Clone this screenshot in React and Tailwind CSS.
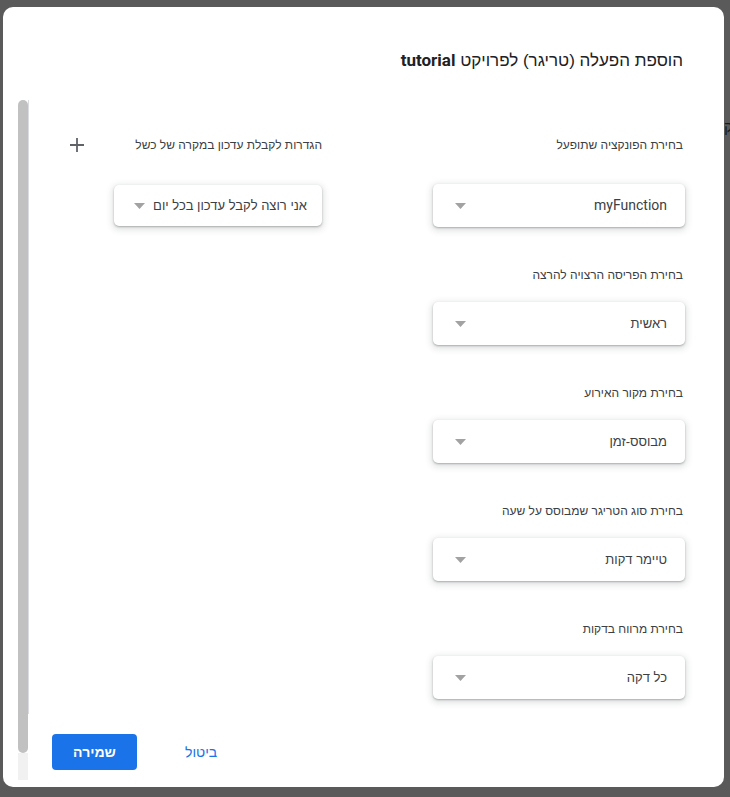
import React from 'react'

const font = { fontFamily: '"Liberation Sans", Arial, sans-serif' }
const latin = { fontFamily: 'Roboto, "Liberation Sans", sans-serif' }

const Arrow = () => (
    <svg width="11" height="6" viewBox="0 0 11 6" className="shrink-0">
        <path d="M0 0h11L5.5 6z" fill="#a2a2a2" />
    </svg>
)

const Field = ({ label, value, first, isLatin }) => (
    <div className={first ? 'pt-[36px]' : 'pt-[39px]'}>
        <div className={`text-[12px] leading-[18px] text-[#3c4043] pr-[2px] ${first ? 'mb-[30px]' : 'mb-[18px]'}`}>{label}</div>
        <div className="w-[252px] h-[43px] bg-white rounded-[5px] shadow-[0_1px_2px_rgba(60,64,67,0.35),0_2px_6px_2px_rgba(60,64,67,0.15)] flex items-center justify-between pr-[18px] pl-[22px]">
            <span className={`${isLatin ? 'text-[14px]' : 'text-[13px]'} font-normal text-[#3c4043]`} style={isLatin ? latin : undefined}>{value}</span>
            <Arrow />
        </div>
    </div>
)

const fields = [
    ['בחירת הפונקציה שתופעל', 'myFunction'],
    ['בחירת הפריסה הרצויה להרצה', 'ראשית'],
    ['בחירת מקור האירוע', 'מבוסס-זמן'],
    ['בחירת סוג הטריגר שמבוסס על שעה', 'טיימר דקות'],
    ['בחירת מרווח בדקות', 'כל דקה'],
]

export default function App() {
    return (
        <div className="relative w-[730px] h-[797px] bg-[#5a5a5a] pt-[7px] pl-[3px] overflow-hidden" style={font}>
            <span className="absolute left-[724px] top-[116px] text-[15px] text-[#1a1a1a]">ק</span>
            <div className="w-[721px] h-[780px] bg-white rounded-[10px] flex flex-col">
                <div dir="rtl" className="h-[93px] shrink-0 pr-[41px] pt-[41px] text-[17px] leading-[24px] text-[#202124]">
                    הוספת הפעלה (טריגר) לפרויקט <span className="font-bold" style={latin}>tutorial</span>
                </div>
                <div className="flex h-[680px] shrink-0">
                    <div className="ml-[15px] w-[10px] shrink-0 flex flex-col">
                        <div className="h-[653px] shrink-0 bg-[#c1c1c1] rounded-[5px]" />
                        <div className="flex-1 bg-[#f1f1f1]" />
                    </div>
                    <div className="flex-1 flex flex-col">
                        <div className="flex h-[614px] shrink-0">
                            <div dir="rtl" className="w-[349px] border-l border-[#dadce0] pr-[55px] pl-[40px]">
                                <div className="pt-[36px] flex justify-between items-center">
                                    <span className="text-[12px] leading-[18px] text-[#3c4043]">הגדרות לקבלת עדכון במקרה של כשל</span>
                                    <svg width="16" height="16" viewBox="0 0 16 16">
                                        <path d="M8 1v14M1 8h14" stroke="#5f6368" strokeWidth="1.8" />
                                    </svg>
                                </div>
                                <div className="mt-[31px] inline-flex items-center gap-[8px] h-[41px] bg-white rounded-[5px] shadow-[0_1px_2px_rgba(60,64,67,0.35),0_2px_6px_2px_rgba(60,64,67,0.15)] pr-[15px] pl-[20px]">
                                    <span className="text-[13px] font-normal text-[#3c4043]">אני רוצה לקבל עדכון בכל יום</span>
                                    <Arrow />
                                </div>
                            </div>
                            <div dir="rtl" className="flex-1 pr-[39px]">
                                {fields.map(([l, v], i) => (
                                    <Field key={i} label={l} value={v} first={i === 0} isLatin={i === 0} />
                                ))}
                            </div>
                        </div>
                        <div className="mt-[20px] flex items-center pl-[24px]">
                            <button className="w-[85px] h-[36px] bg-[#1a73e8] rounded-[4px] text-white text-[14px] font-bold">שמירה</button>
                            <button className="ml-[48px] text-[14px] text-[#1a73e8]">ביטול</button>
                        </div>
                    </div>
                </div>
            </div>
        </div>
    )
}
